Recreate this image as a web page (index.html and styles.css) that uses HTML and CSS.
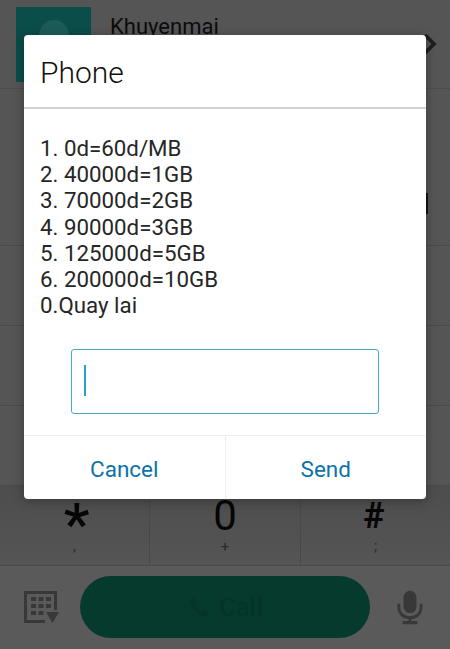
FILE: index.html
```html
<!DOCTYPE html>
<html lang="en">
<head>
<meta charset="utf-8">
<title>Phone</title>
<link rel="stylesheet" href="styles.css">
</head>
<body>
<div class="screen">
  <div class="dialer">
    <div class="contact">
      <div class="avatar"><span class="avatar-head"></span></div>
      <div class="contact-name">Khuyenmai</div>
      <svg class="chevron" viewBox="0 0 14 24"><path d="M2 3l9 9-9 9" fill="none" stroke="#1f1f1f" stroke-width="3.6"/></svg>
    </div>
    <div class="spacer"></div>
    <div class="keyrow"><div class="key"><b>1</b></div><div class="key"><b>2</b></div><div class="key"><b>3</b></div></div>
    <div class="keyrow"><div class="key"><b>4</b></div><div class="key"><b>5</b></div><div class="key"><b>6</b></div></div>
    <div class="keyrow"><div class="key"><b>7</b></div><div class="key"><b>8</b></div><div class="key"><b>9</b></div></div>
    <div class="keyrow last">
      <div class="key"><b class="star">*</b><small>,</small></div>
      <div class="key"><b class="zero">0</b><small>+</small></div>
      <div class="key"><b class="hash">#</b><small>;</small></div>
    </div>
    <div class="actions">
      <svg class="pad-icon" viewBox="0 0 36 34">
        <path d="M1 1h33v19h-3V4H4v26h18v3H1z" fill="#383838"/>
        <path d="M8 7h5v4H8zM15.500 7h5v4h-5zM23 7h5v4h-5zM8 14h5v4H8zM15.500 14h5v4h-5zM23 14h5v4h-5zM8 21h5v4H8zM15.500 21h5v4h-5z" fill="#383838"/>
        <path d="M23 22h13l-6.500 11z" fill="#383838"/>
      </svg>
      <div class="call">
        <svg class="call-icon" viewBox="0 0 24 24"><path d="M6.600 2.500l3.200 4.800-1.900 2.400c1 2.600 3.700 5.300 6.400 6.400l2.400-1.900 4.800 3.200-1.600 3.300c-.5.800-1.300 1-2.200.9C10 19.800 4.200 14 3.300 6.300c-.1-.9.100-1.700.9-2.200z" fill="#07342a"/></svg>
        <span>Call</span>
      </div>
      <svg class="mic-icon" viewBox="0 0 28 38">
        <rect x="7" y="1" width="14" height="24" rx="7" fill="#383838"/>
        <path d="M2 15v4c0 6.500 5 11 12 11s12-4.500 12-11v-4" fill="none" stroke="#383838" stroke-width="3"/>
        <path d="M12.500 30h3v4h-3zM6 33.500h16V37H6z" fill="#383838"/>
      </svg>
    </div>
  </div>
  <span class="edge-mark"></span>
  <div class="modal">
    <div class="modal-title">Phone</div>
    <div class="modal-body">
      <div class="menu">
        <div>1. 0d=60d/MB</div>
        <div>2. 40000d=1GB</div>
        <div>3. 70000d=2GB</div>
        <div>4. 90000d=3GB</div>
        <div>5. 125000d=5GB</div>
        <div>6. 200000d=10GB</div>
        <div>0.Quay lai</div>
      </div>
      <div class="field"><span class="caret"></span></div>
    </div>
    <div class="buttons">
      <div class="btn">Cancel</div>
      <div class="btn">Send</div>
    </div>
  </div>
</div>
</body>
</html>
```
FILE: styles.css
```css
* { box-sizing: border-box; }
html, body { margin: 0; padding: 0; }
body { width: 450px; height: 649px; overflow: hidden; font-family: Roboto, "Liberation Sans", sans-serif; }
.screen { position: relative; width: 450px; height: 649px; background: #555; overflow: hidden; }
.dialer { display: flex; flex-direction: column; height: 649px; }
.contact { display: flex; align-items: flex-start; height: 89px; flex: none; padding: 7px 13px 0 16px; border-bottom: 1px solid #4d4d4d; }
.avatar { width: 75px; height: 75px; flex: none; background: #0a4d49; display: flex; justify-content: center; padding-top: 13px; }
.avatar-head { width: 30px; height: 30px; border-radius: 50%; background: #1c5c58; }
.contact-name { margin-left: 19px; margin-top: 8px; font-size: 22px; line-height: 24px; color: #0c0c0c; flex: 1; }
.chevron { width: 14px; height: 24px; margin-top: 25px; flex: none; }
.spacer { height: 156px; flex: none; }
.keyrow { display: flex; height: 80px; flex: none; border-top: 1px solid #4a4a4a; }
.keyrow.last { background: linear-gradient(#4d4d4d, #555); }
.key { flex: 1; border-left: 1px solid #484848; display: flex; flex-direction: column; align-items: center; color: #060606; }
.key:first-child { border-left: 0; flex: 0 0 149px; }
.key:last-child { flex: 0 0 150px; }
.key b { font-weight: 400; font-size: 38px; line-height: 38px; }
.key b.zero { margin-top: 7px; font-size: 42px; line-height: 46px; font-weight: 400; }
.key b.star { margin-top: 10px; margin-left: 4px; font-size: 58px; line-height: 56px; height: 42px; font-weight: 500; }
.key b.hash { font-size: 36px; line-height: 44px; font-weight: 700; margin-top: 8px; height: 44px; margin-left: -3px; }
.key small { font-size: 15px; line-height: 18px; color: #2c2c2c; margin-top: -1px; }
.actions { flex: 1; display: flex; align-items: center; padding: 0 0 1px 23px; background: #5a5a5a; border-top: 1px solid #4a4a4a; }
.pad-icon { width: 36px; height: 34px; flex: none; }
.call { width: 290px; height: 62px; margin-left: 21px; border-radius: 31px; background: #063a2d; display: flex; align-items: center; justify-content: center; gap: 8px; color: #07342a; font-size: 26px; font-weight: 500; }
.call-icon { width: 24px; height: 24px; flex: none; }
.mic-icon { width: 26px; height: 37px; margin-left: 27px; flex: none; }
.edge-mark { position: absolute; left: 426px; top: 193px; width: 2px; height: 21px; background: #141414; }
.modal { position: absolute; left: 24px; top: 35px; width: 402px; height: 464px; background: #fff; border-radius: 4px; display: flex; flex-direction: column; box-shadow: 0 2px 12px rgba(0, 0, 0, .3); }
.modal-title { height: 74px; flex: none; padding: 20px 16px 0; font-size: 30px; line-height: 36px; font-weight: 300; color: #111; border-bottom: 2px solid #d2d2d2; }
.modal-body { flex: 1; padding: 26px 47px 0 16px; display: flex; flex-direction: column; border-bottom: 1px solid #eee; }
.menu { font-size: 22.300px; line-height: 26.200px; color: #262626; }
.field { width: 308px; height: 65px; margin: 31px 0 0 31px; flex: none; border: 1.500px solid #4aa9c4; border-radius: 3px; padding: 15px 0 0 12px; }
.caret { display: block; width: 2px; height: 31px; background: #28a0cb; }
.buttons { display: flex; height: 63px; flex: none; }
.btn { flex: 1; display: flex; align-items: center; justify-content: center; font-size: 22.500px; color: #0d72a8; padding-top: 3px; }
.btn + .btn { border-left: 1px solid #eee; }
```
